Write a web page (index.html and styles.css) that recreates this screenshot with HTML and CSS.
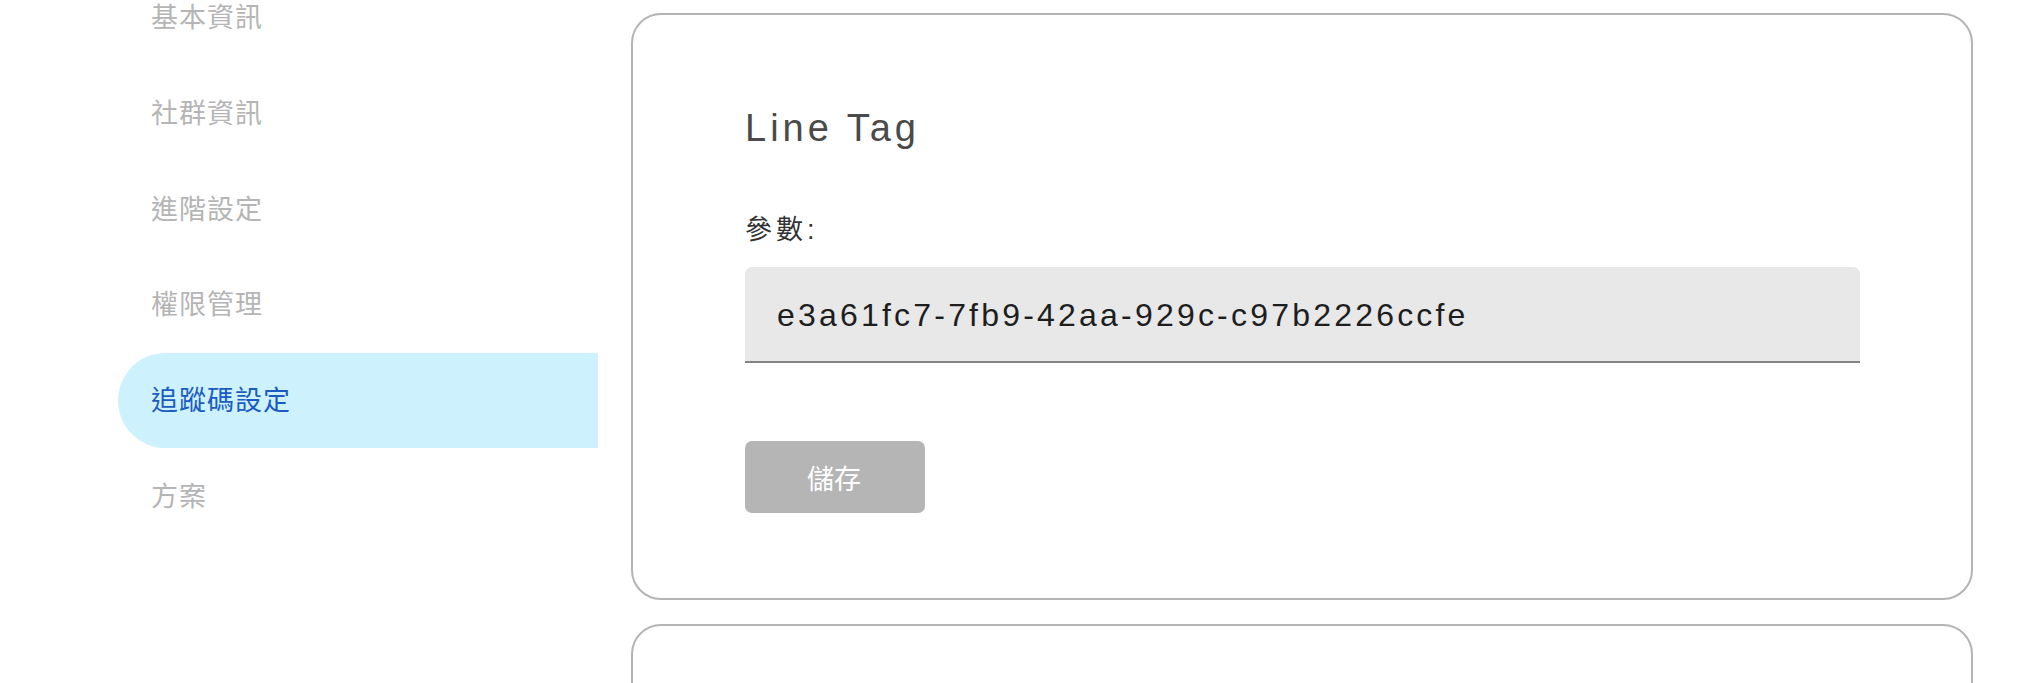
FILE: index.html
```html
<!DOCTYPE html>
<html lang="zh-Hant">
<head>
<meta charset="utf-8">
<title>追蹤碼設定</title>
<link rel="stylesheet" href="styles.css">
</head>
<body>
<div class="layout">
  <nav class="sidebar">
    <ul class="nav-list">
      <li class="nav-item">基本資訊</li>
      <li class="nav-item">社群資訊</li>
      <li class="nav-item">進階設定</li>
      <li class="nav-item">權限管理</li>
      <li class="nav-item active">追蹤碼設定</li>
      <li class="nav-item">方案</li>
    </ul>
  </nav>
  <main class="content">
    <section class="card">
      <h2 class="card-title">Line Tag</h2>
      <label class="field-label">參數:</label>
      <div class="field">e3a61fc7-7fb9-42aa-929c-c97b2226ccfe</div>
      <button class="save-btn" type="button">儲存</button>
    </section>
    <section class="card card-next"></section>
  </main>
</div>
</body>
</html>
```

FILE: styles.css
```css
* {
  box-sizing: border-box;
}

html, body {
  margin: 0;
  padding: 0;
  background: #ffffff;
}

body {
  font-family: "Liberation Sans", "Noto Sans CJK TC", sans-serif;
  overflow: hidden;
}

.layout {
  display: flex;
  align-items: flex-start;
  gap: 33px;
  padding-left: 118px;
}

.sidebar {
  width: 480px;
  flex: 0 0 480px;
}

.nav-list {
  list-style: none;
  margin: -30px 0 0 0;
  padding: 0;
}

.nav-item {
  height: 95.7px;
  display: flex;
  align-items: center;
  padding-left: 33px;
  padding-bottom: 3px;
  font-family: "Noto Sans CJK TC", sans-serif;
  font-size: 27px;
  letter-spacing: 1px;
  line-height: 1.2;
  color: #b5b5b5;
}

.nav-item.active {
  background: #cdf1fd;
  color: #1a5cbf;
  border-radius: 48px 0 0 48px;
}

.content {
  flex: 0 0 1342px;
  display: flex;
  flex-direction: column;
  gap: 24px;
  padding-top: 13px;
}

.card {
  border: 2px solid #b4b4b4;
  border-radius: 30px;
  padding: 94px 111px 85px 112px;
  display: flex;
  flex-direction: column;
  align-items: flex-start;
}

.card-title {
  margin: 0;
  font-family: "Liberation Sans", sans-serif;
  font-weight: normal;
  font-size: 38px;
  line-height: 38px;
  letter-spacing: 4px;
  color: #4a4a4a;
}

.field-label {
  margin-top: 67px;
  font-family: "Liberation Sans", "Noto Sans CJK TC", sans-serif;
  font-size: 27px;
  line-height: 32px;
  letter-spacing: 4px;
  color: #333333;
}

.field {
  margin-top: 21px;
  width: 100%;
  height: 96px;
  display: flex;
  align-items: center;
  padding-left: 32px;
  padding-top: 2px;
  background: #e8e8e8;
  border-bottom: 2px solid #838383;
  border-radius: 7px 7px 0 0;
  font-family: "Liberation Sans", sans-serif;
  font-size: 32px;
  letter-spacing: 3.2px;
  color: #1e1e1e;
}

.save-btn {
  margin-top: 78px;
  width: 180px;
  height: 72px;
  border: none;
  border-radius: 7px;
  background: #b5b5b5;
  color: #ffffff;
  font-family: "Noto Sans CJK TC", sans-serif;
  font-size: 27px;
  padding: 0 2px 0 0;
  cursor: pointer;
}

.card-next {
  height: 300px;
  padding: 0;
}
```
